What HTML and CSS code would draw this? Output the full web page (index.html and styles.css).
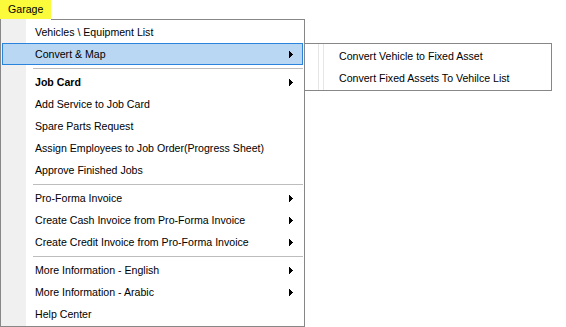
FILE: index.html
```html
<!DOCTYPE html>
<html>
<head>
<meta charset="utf-8">
<link rel="stylesheet" href="styles.css">
</head>
<body>
<div class="menubar"><div class="tab">Garage</div></div>
<div class="area">
  <div class="menu">
    <div class="item">Vehicles \ Equipment List</div>
    <div class="item sub active">Convert &amp; Map<svg class="arrow" width="4" height="7" viewBox="0 0 4 7"><rect x="0" y="0" width="1" height="7"/><rect x="1" y="1" width="1" height="5"/><rect x="2" y="2" width="1" height="3"/><rect x="3" y="3" width="1" height="1"/></svg></div>
    <div class="sep"></div>
    <div class="item sub bold">Job Card<svg class="arrow" width="4" height="7" viewBox="0 0 4 7"><rect x="0" y="0" width="1" height="7"/><rect x="1" y="1" width="1" height="5"/><rect x="2" y="2" width="1" height="3"/><rect x="3" y="3" width="1" height="1"/></svg></div>
    <div class="item">Add Service to Job Card</div>
    <div class="item">Spare Parts Request</div>
    <div class="item">Assign Employees to Job Order(Progress Sheet)</div>
    <div class="item">Approve Finished Jobs</div>
    <div class="sep"></div>
    <div class="item sub">Pro-Forma Invoice<svg class="arrow" width="4" height="7" viewBox="0 0 4 7"><rect x="0" y="0" width="1" height="7"/><rect x="1" y="1" width="1" height="5"/><rect x="2" y="2" width="1" height="3"/><rect x="3" y="3" width="1" height="1"/></svg></div>
    <div class="item sub">Create Cash Invoice from Pro-Forma Invoice<svg class="arrow" width="4" height="7" viewBox="0 0 4 7"><rect x="0" y="0" width="1" height="7"/><rect x="1" y="1" width="1" height="5"/><rect x="2" y="2" width="1" height="3"/><rect x="3" y="3" width="1" height="1"/></svg></div>
    <div class="item sub">Create Credit Invoice from Pro-Forma Invoice<svg class="arrow" width="4" height="7" viewBox="0 0 4 7"><rect x="0" y="0" width="1" height="7"/><rect x="1" y="1" width="1" height="5"/><rect x="2" y="2" width="1" height="3"/><rect x="3" y="3" width="1" height="1"/></svg></div>
    <div class="sep"></div>
    <div class="item sub">More Information - English<svg class="arrow" width="4" height="7" viewBox="0 0 4 7"><rect x="0" y="0" width="1" height="7"/><rect x="1" y="1" width="1" height="5"/><rect x="2" y="2" width="1" height="3"/><rect x="3" y="3" width="1" height="1"/></svg></div>
    <div class="item sub">More Information - Arabic<svg class="arrow" width="4" height="7" viewBox="0 0 4 7"><rect x="0" y="0" width="1" height="7"/><rect x="1" y="1" width="1" height="5"/><rect x="2" y="2" width="1" height="3"/><rect x="3" y="3" width="1" height="1"/></svg></div>
    <div class="item">Help Center</div>
  </div>
  <div class="submenu">
    <div class="item">Convert Vehicle to Fixed Asset</div>
    <div class="item">Convert Fixed Assets To Vehilce List</div>
  </div>
</div>
</body>
</html>
```
FILE: styles.css
```css
html, body {
  margin: 0;
  padding: 0;
  background: #ffffff;
}
body {
  font-family: "Liberation Sans", Arial, sans-serif;
  font-size: 10.6px;
  color: #000000;
}
.menubar {
  height: 19px;
  display: flex;
}
.tab {
  width: 51px;
  box-sizing: border-box;
  height: 19px;
  padding: 0 0 0 8px;
  line-height: 19px;
  background: #fbfb3c;
}
.area {
  display: flex;
  align-items: flex-start;
}
.menu {
  width: 305px;
  box-sizing: border-box;
  border: 1px solid #878787;
  border-top: 0;
  padding: 2px 1px 1px 1px;
  background:
    linear-gradient(#878787, #878787) 50px 0 / 100% 1px no-repeat,
    linear-gradient(to right, #f0f0f0 25px, #ffffff 25px);
}
.item {
  height: 22px;
  box-sizing: border-box;
  padding: 1px 10px 0 33px;
  line-height: 21px;
  display: flex;
  align-items: center;
  white-space: nowrap;
}
.item .arrow {
  margin-left: auto;
  fill: #000000;
  display: block;
  margin-top: -1px;
}
.item.active {
  background: #b9d7f3;
  box-shadow: inset 0 0 0 1px #2a84dd;
}
.item.bold {
  font-weight: bold;
}
.sep {
  height: 6px;
  margin-left: 31px;
  background: linear-gradient(#bdbdbd, #bdbdbd) 0 3px / 100% 1px no-repeat;
}
.submenu {
  width: 248px;
  box-sizing: border-box;
  margin-top: 24px;
  margin-left: -1px;
  border: 1px solid #878787;
  padding: 1px;
  background:
    linear-gradient(#e6e6e6, #e6e6e6) 13px 0 / 1px 100% no-repeat,
    linear-gradient(#e6e6e6, #e6e6e6) 18px 0 / 1px 100% no-repeat,
    #ffffff;
}
```
